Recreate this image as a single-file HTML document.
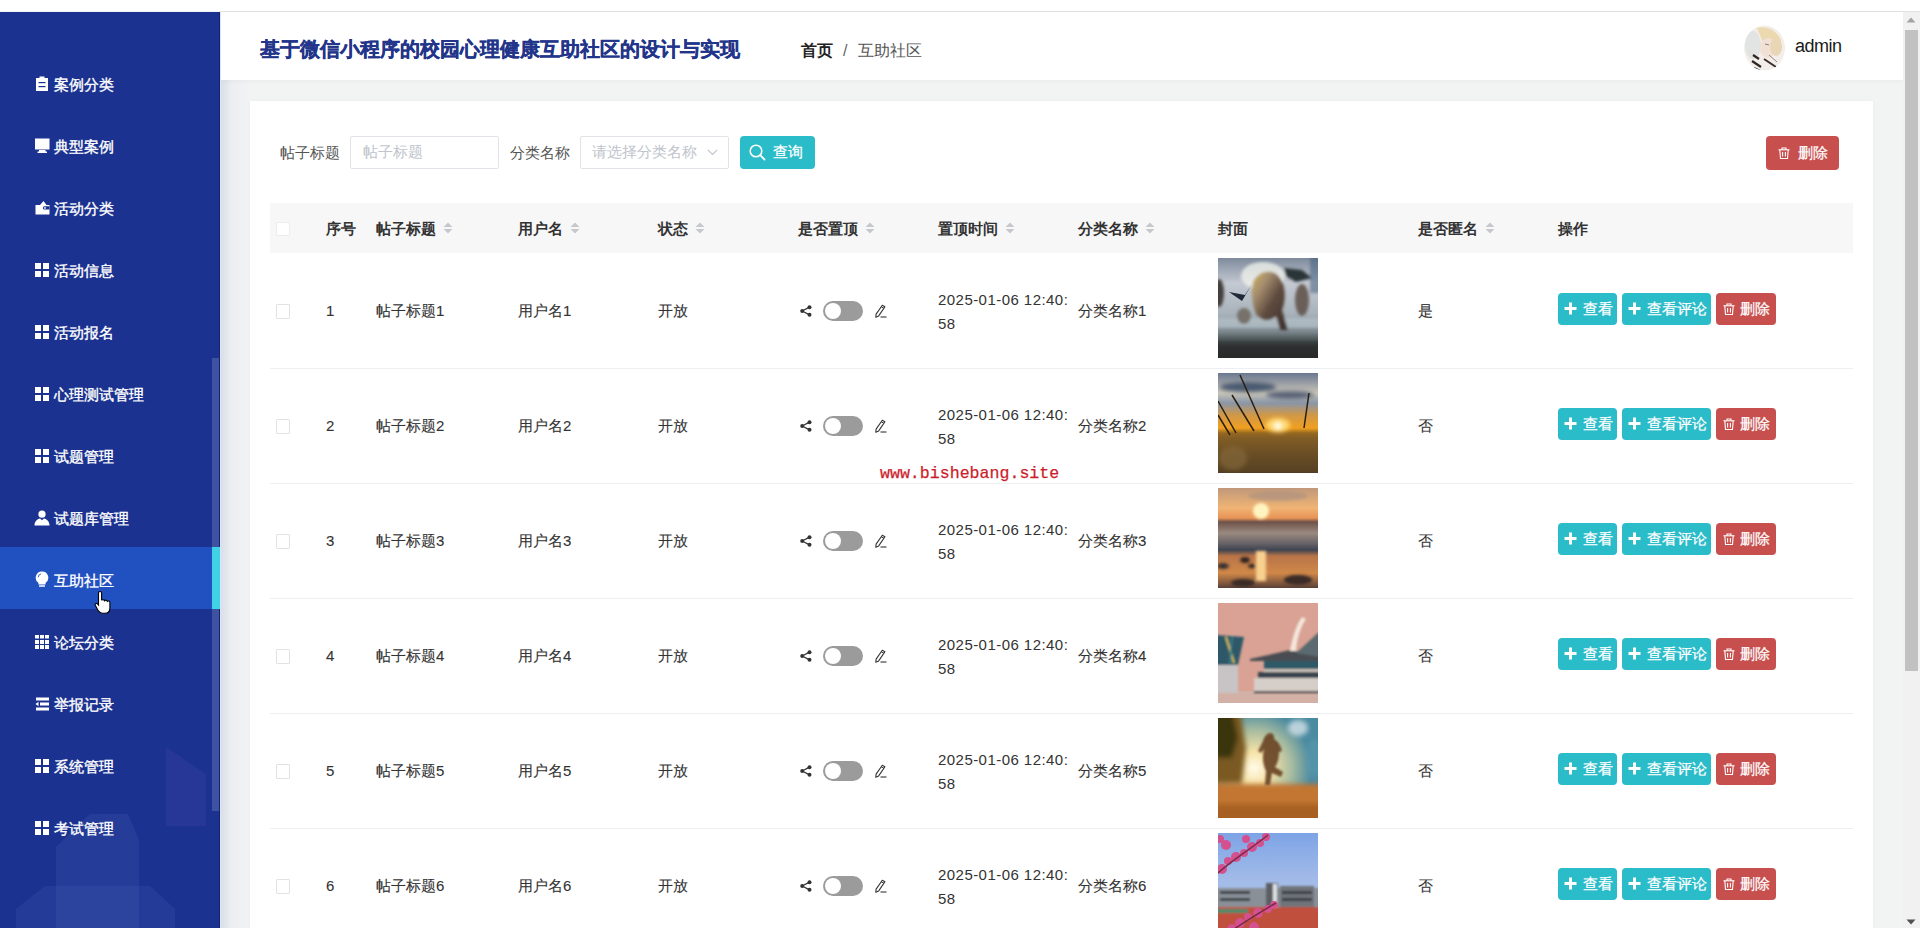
<!DOCTYPE html>
<html><head><meta charset="utf-8">
<style>
*{box-sizing:border-box;margin:0;padding:0}
html,body{width:1920px;height:928px;overflow:hidden;background:#f2f3f3;font-family:"Liberation Sans",sans-serif;color:#333}
.abs{position:absolute}
.mt{color:#fff;font-size:15px;line-height:22px;white-space:nowrap;-webkit-text-stroke:0.35px #fff}
.th{font-size:15px;font-weight:bold;color:#333;line-height:22px;white-space:nowrap}
.td{font-size:15px;color:#333;line-height:22px;white-space:nowrap;-webkit-text-stroke:0.1px #333}
.dt{line-height:24px;letter-spacing:0.45px;-webkit-text-stroke:0}
.cb{width:14px;height:14px;border:1px solid #ebedf0;border-radius:2px;background:#fff}
.cb2{width:14px;height:15px;border:1px solid #e2e2e2;border-radius:1px;background:#fff}
.sw{width:40px;height:20px;border-radius:10px;background:#9b9b9b}
.sw .knob{position:absolute;left:2px;top:2px;width:16px;height:16px;border-radius:50%;background:#fff}
.btn{height:32px;border-radius:4px;color:#fff;font-size:15px}
.teal{background:#2bbcc9}
.red{background:#c7504f}
.btn .pi{position:absolute;left:6px;top:9px;line-height:0}
.btn .ti{position:absolute;left:7px;top:10px;line-height:0}
.btn .bt{position:absolute;top:5px;line-height:22px;white-space:nowrap;-webkit-text-stroke:0.25px #fff}
</style></head><body>
<div class="abs" style="left:0;top:0;width:1920px;height:11px;background:#fff"></div>
<div class="abs" style="left:220px;top:11px;width:1700px;height:1px;background:#e1e2e5"></div>
<div class="abs" id="side" style="left:0;top:12px;width:220px;height:916px;background:#1b3290;overflow:hidden">
<svg class="abs" style="left:0;top:700px" width="220" height="216" viewBox="0 700 220 216"><path d="M56 835L90 802L128 802L139 828L139 928L56 928z" fill="rgba(110,130,210,0.13)"/><path d="M16 897L45 874L150 874L175 897L175 928L16 928z" fill="rgba(110,130,210,0.12)"/><path d="M166 735L206 762L206 814L166 814z" fill="rgba(120,90,200,0.13)"/></svg>
<div class="abs" style="left:212px;top:346px;width:7px;height:453px;background:#3d52a0"></div>
<div class="abs" style="left:219px;top:0;width:1px;height:916px;background:#1a2466"></div>
<div class="abs" style="left:35px;top:64px;line-height:0"><svg width="14" height="15" viewBox="0 0 14 15"><path d="M1 2h3.5v-1.5h5v1.5h3.5v13h-12z" fill="#fff"/><rect x="3.5" y="6" width="7" height="1.2" fill="#1b3290"/><rect x="3.5" y="10" width="7" height="1.2" fill="#1b3290"/></svg></div>
<div class="abs mt" style="left:54px;top:62px">案例分类</div>
<div class="abs" style="left:35px;top:126px;line-height:0"><svg width="15" height="15" viewBox="0 0 15 15"><rect x="0" y="0.5" width="14.5" height="11" fill="#fff"/><rect x="4" y="12" width="6.5" height="2" fill="#fff"/><rect x="2.5" y="13.5" width="9.5" height="1.5" fill="#fff"/></svg></div>
<div class="abs mt" style="left:54px;top:124px">典型案例</div>
<div class="abs" style="left:35px;top:188px;line-height:0"><svg width="15" height="15" viewBox="0 0 15 15"><path d="M0.5 5h14v9.5h-14z" fill="#fff"/><path d="M5 5l3.5-4 3 4z" fill="#fff"/><path d="M14.5 9.5h-5a1.6 1.6 0 0 1 0-3.2h5z" fill="#1b3290"/><circle cx="10" cy="7.9" r="0.9" fill="#fff"/></svg></div>
<div class="abs mt" style="left:54px;top:186px">活动分类</div>
<div class="abs" style="left:35px;top:251px;line-height:0"><svg width="14" height="14" viewBox="0 0 14 14"><rect x="0" y="0" width="6" height="6" fill="#fff"/><rect x="8" y="0" width="6" height="6" fill="#fff"/><rect x="0" y="8" width="6" height="6" fill="#fff"/><rect x="8" y="8" width="6" height="6" fill="#fff"/></svg></div>
<div class="abs mt" style="left:54px;top:248px">活动信息</div>
<div class="abs" style="left:35px;top:313px;line-height:0"><svg width="14" height="14" viewBox="0 0 14 14"><rect x="0" y="0" width="6" height="6" fill="#fff"/><rect x="8" y="0" width="6" height="6" fill="#fff"/><rect x="0" y="8" width="6" height="6" fill="#fff"/><rect x="8" y="8" width="6" height="6" fill="#fff"/></svg></div>
<div class="abs mt" style="left:54px;top:310px">活动报名</div>
<div class="abs" style="left:35px;top:375px;line-height:0"><svg width="14" height="14" viewBox="0 0 14 14"><rect x="0" y="0" width="6" height="6" fill="#fff"/><rect x="8" y="0" width="6" height="6" fill="#fff"/><rect x="0" y="8" width="6" height="6" fill="#fff"/><rect x="8" y="8" width="6" height="6" fill="#fff"/></svg></div>
<div class="abs mt" style="left:54px;top:372px">心理测试管理</div>
<div class="abs" style="left:35px;top:437px;line-height:0"><svg width="14" height="14" viewBox="0 0 14 14"><rect x="0" y="0" width="6" height="6" fill="#fff"/><rect x="8" y="0" width="6" height="6" fill="#fff"/><rect x="0" y="8" width="6" height="6" fill="#fff"/><rect x="8" y="8" width="6" height="6" fill="#fff"/></svg></div>
<div class="abs mt" style="left:54px;top:434px">试题管理</div>
<div class="abs" style="left:34px;top:498px;line-height:0"><svg width="16" height="16" viewBox="0 0 16 16"><circle cx="8" cy="4.2" r="3.6" fill="#fff"/><path d="M0.5 15.5c0-4 2.5-6.5 5.5-7l2 1.8 2-1.8c3 .5 5.5 3 5.5 7z" fill="#fff"/></svg></div>
<div class="abs mt" style="left:54px;top:496px">试题库管理</div>
<div class="abs" style="left:0;top:535px;width:220px;height:62px;background:#2150c0"></div>
<div class="abs" style="left:212px;top:535px;width:8px;height:62px;background:#3fd2e4"></div>
<div class="abs" style="left:35px;top:559px;line-height:0"><svg width="14" height="17" viewBox="0 0 14 17"><path d="M7 0.5a6.2 6.2 0 0 1 3.6 11.3v1.7h-7.2v-1.7A6.2 6.2 0 0 1 7 0.5z" fill="#fff"/><rect x="4" y="14.2" width="6" height="1.6" rx="0.6" fill="#fff"/><path d="M3.2 6.2a3.8 3.8 0 0 1 3-3.4" stroke="#2a55c4" stroke-width="0.9" fill="none"/></svg></div>
<div class="abs mt" style="left:54px;top:558px">互助社区</div>
<div class="abs" style="left:35px;top:623px;line-height:0"><svg width="14" height="14" viewBox="0 0 14 14"><g fill="#fff"><rect x="0" y="0" width="4" height="3.5"/><rect x="5" y="0" width="4" height="3.5"/><rect x="10" y="0" width="4" height="3.5"/><rect x="0" y="5" width="4" height="4"/><rect x="5" y="5" width="4" height="4"/><rect x="10" y="5" width="4" height="4"/><rect x="0" y="10" width="4" height="4"/><rect x="5" y="10" width="4" height="4"/><rect x="10" y="10" width="4" height="4"/></g></svg></div>
<div class="abs mt" style="left:54px;top:620px">论坛分类</div>
<div class="abs" style="left:35px;top:685px;line-height:0"><svg width="14" height="14" viewBox="0 0 14 14"><g fill="#fff"><rect x="1" y="0.5" width="13" height="3"/><rect x="5" y="5.5" width="9" height="3"/><path d="M0.5 7l3-2.2v4.4z"/><rect x="1" y="10.5" width="13" height="3"/></g></svg></div>
<div class="abs mt" style="left:54px;top:682px">举报记录</div>
<div class="abs" style="left:35px;top:747px;line-height:0"><svg width="14" height="14" viewBox="0 0 14 14"><rect x="0" y="0" width="6" height="6" fill="#fff"/><rect x="8" y="0" width="6" height="6" fill="#fff"/><rect x="0" y="8" width="6" height="6" fill="#fff"/><rect x="8" y="8" width="6" height="6" fill="#fff"/></svg></div>
<div class="abs mt" style="left:54px;top:744px">系统管理</div>
<div class="abs" style="left:35px;top:809px;line-height:0"><svg width="14" height="14" viewBox="0 0 14 14"><rect x="0" y="0" width="6" height="6" fill="#fff"/><rect x="8" y="0" width="6" height="6" fill="#fff"/><rect x="0" y="8" width="6" height="6" fill="#fff"/><rect x="8" y="8" width="6" height="6" fill="#fff"/></svg></div>
<div class="abs mt" style="left:54px;top:806px">考试管理</div>
<svg class="abs" style="left:94px;top:578px" width="20" height="24" viewBox="0 0 20 24"><path d="M6 1.5c1 0 1.6.7 1.6 1.6v7.2c.3-.6 2.6-.9 2.9.4.5-.8 2.5-.8 2.8.6.6-.6 2.5-.4 2.6 1.2v5.5c0 3-1.8 5.3-5 5.3h-2.5c-2 0-3-1-4.2-2.6L1.3 15.2c-.7-1 .7-2.5 2-1.5l1.2 1.3V3.1c0-.9.6-1.6 1.5-1.6z" fill="#fff" stroke="#000" stroke-width="1.1"/></svg>
</div>
<div class="abs" style="left:220px;top:12px;width:1px;height:916px;background:#dbe3ff"></div>
<div class="abs" style="left:221px;top:80px;width:29px;height:848px;background:linear-gradient(90deg,#d9dee8,#eceef1 35%,#f2f3f3)"></div>
<div class="abs" style="left:221px;top:12px;width:1682px;height:68px;background:#fff;box-shadow:0 2px 5px rgba(0,0,0,0.03)"></div>
<div class="abs" style="left:260px;top:35px;font-size:20px;font-weight:bold;color:#22358a;line-height:28px;white-space:nowrap;-webkit-text-stroke:0.3px #22358a">基于微信小程序的校园心理健康互助社区的设计与实现</div>
<div class="abs" style="left:801px;top:40px;font-size:16px;font-weight:bold;color:#222;line-height:22px">首页</div>
<div class="abs" style="left:843px;top:40px;font-size:16px;color:#666;line-height:22px">/</div>
<div class="abs" style="left:858px;top:40px;font-size:16px;color:#555;line-height:22px">互助社区</div>
<svg class="abs" style="left:1743px;top:25px" width="44" height="46" viewBox="0 0 44 46"><defs><filter id="ba"><feGaussianBlur stdDeviation="0.7"/></filter><clipPath id="ca"><ellipse cx="21.5" cy="23" rx="20.5" ry="22.5"/></clipPath></defs><g clip-path="url(#ca)" filter="url(#ba)"><rect width="44" height="46" fill="#f3eee9"/><ellipse cx="10" cy="20" rx="8" ry="14" fill="#e2e4e4"/><path d="M14 3c10-3 20 3 24 12l0 12-14 0z" fill="#ecd9b0"/><ellipse cx="25" cy="23" rx="8" ry="10" fill="#f2e0d4"/><ellipse cx="33" cy="22" rx="6" ry="9" fill="#e9d6b4"/><path d="M22 19l4 1" stroke="#8a8080" stroke-width="1.2"/><g stroke="#2e2622" stroke-width="2.2"><path d="M10 30l6 4"/><path d="M9 36l9 6"/><path d="M11 43l6 3"/></g><path d="M21 34l12 8" stroke="#3a2e2a" stroke-width="2"/><path d="M26 30l8 7" stroke="#8a7a70" stroke-width="0.9"/></g></svg>
<div class="abs" style="left:1795px;top:35px;font-size:18px;letter-spacing:-0.5px;color:#1a1a1a;line-height:22px">admin</div>
<div class="abs" style="left:250px;top:101px;width:1623px;height:840px;background:#fff;box-shadow:0 0 5px rgba(0,0,0,0.035)"></div>
<div class="abs" style="left:280px;top:142px;font-size:15px;color:#555;line-height:22px">帖子标题</div>
<div class="abs" style="left:350px;top:136px;width:149px;height:33px;border:1px solid #e1e3e8;border-radius:2px;background:#fff"></div>
<div class="abs" style="left:363px;top:141px;font-size:15px;color:#c0c4cc;line-height:22px">帖子标题</div>
<div class="abs" style="left:510px;top:142px;font-size:15px;color:#555;line-height:22px">分类名称</div>
<div class="abs" style="left:580px;top:136px;width:149px;height:33px;border:1px solid #e1e3e8;border-radius:2px;background:#fff"></div>
<div class="abs" style="left:592px;top:141px;font-size:15px;color:#c0c4cc;line-height:22px">请选择分类名称</div>
<div class="abs" style="left:707px;top:149px;line-height:0"><svg width="11" height="7" viewBox="0 0 11 7"><path d="M0.8 0.8l4.7 4.7 4.7-4.7" fill="none" stroke="#c0c4cc" stroke-width="1.1"/></svg></div>
<div class="abs btn teal" style="left:740px;top:136px;width:75px;height:33px"><span class="abs" style="left:9px;top:8px;line-height:0"><svg width="17" height="17" viewBox="0 0 17 17"><circle cx="7" cy="7" r="5.8" fill="none" stroke="#fff" stroke-width="1.6"/><path d="M11.2 11.2l4.3 4.3" stroke="#fff" stroke-width="1.8" stroke-linecap="round"/></svg></span><span class="bt" style="left:33px">查询</span></div>
<div class="abs btn red" style="left:1766px;top:136px;width:73px;height:34px"><span class="abs" style="left:12px;top:11px;line-height:0"><svg width="12" height="12" viewBox="0 0 12 12"><g fill="none" stroke="#fff" stroke-width="1.1"><path d="M0.5 2.8h11"/><path d="M4 2.8v-1.8h4v1.8"/><path d="M1.8 2.8l.7 8.7h7l.7-8.7"/><path d="M4.6 5v4.5M7.4 5v4.5"/></g></svg></span><span class="bt" style="left:32px;top:6px">删除</span></div>
<div class="abs" style="left:270px;top:203px;width:1583px;height:50px;background:#f7f7f8"></div>
<div class="abs cb" style="left:276px;top:222px"></div>
<div class="abs th" style="left:326px;top:218px">序号</div>
<div class="abs th" style="left:376px;top:218px">帖子标题</div>
<div class="abs" style="left:443px;top:222px;line-height:0"><svg width="10" height="12" viewBox="0 0 10 12"><path d="M5 0.5L9.5 5H0.5z" fill="#c6c8cc"/><path d="M5 11.5L9.5 7H0.5z" fill="#c6c8cc"/></svg></div>
<div class="abs th" style="left:518px;top:218px">用户名</div>
<div class="abs" style="left:570px;top:222px;line-height:0"><svg width="10" height="12" viewBox="0 0 10 12"><path d="M5 0.5L9.5 5H0.5z" fill="#c6c8cc"/><path d="M5 11.5L9.5 7H0.5z" fill="#c6c8cc"/></svg></div>
<div class="abs th" style="left:658px;top:218px">状态</div>
<div class="abs" style="left:695px;top:222px;line-height:0"><svg width="10" height="12" viewBox="0 0 10 12"><path d="M5 0.5L9.5 5H0.5z" fill="#c6c8cc"/><path d="M5 11.5L9.5 7H0.5z" fill="#c6c8cc"/></svg></div>
<div class="abs th" style="left:798px;top:218px">是否置顶</div>
<div class="abs" style="left:865px;top:222px;line-height:0"><svg width="10" height="12" viewBox="0 0 10 12"><path d="M5 0.5L9.5 5H0.5z" fill="#c6c8cc"/><path d="M5 11.5L9.5 7H0.5z" fill="#c6c8cc"/></svg></div>
<div class="abs th" style="left:938px;top:218px">置顶时间</div>
<div class="abs" style="left:1005px;top:222px;line-height:0"><svg width="10" height="12" viewBox="0 0 10 12"><path d="M5 0.5L9.5 5H0.5z" fill="#c6c8cc"/><path d="M5 11.5L9.5 7H0.5z" fill="#c6c8cc"/></svg></div>
<div class="abs th" style="left:1078px;top:218px">分类名称</div>
<div class="abs" style="left:1145px;top:222px;line-height:0"><svg width="10" height="12" viewBox="0 0 10 12"><path d="M5 0.5L9.5 5H0.5z" fill="#c6c8cc"/><path d="M5 11.5L9.5 7H0.5z" fill="#c6c8cc"/></svg></div>
<div class="abs th" style="left:1218px;top:218px">封面</div>
<div class="abs th" style="left:1418px;top:218px">是否匿名</div>
<div class="abs" style="left:1485px;top:222px;line-height:0"><svg width="10" height="12" viewBox="0 0 10 12"><path d="M5 0.5L9.5 5H0.5z" fill="#c6c8cc"/><path d="M5 11.5L9.5 7H0.5z" fill="#c6c8cc"/></svg></div>
<div class="abs th" style="left:1558px;top:218px">操作</div>
<div class="abs cb2" style="left:276px;top:304px"></div>
<div class="abs td" style="left:326px;top:300px">1</div>
<div class="abs td" style="left:376px;top:300px">帖子标题1</div>
<div class="abs td" style="left:518px;top:300px">用户名1</div>
<div class="abs td" style="left:658px;top:300px">开放</div>
<div class="abs" style="left:800px;top:305px;line-height:0"><svg width="12" height="12" viewBox="0 0 12 12"><g fill="#333"><circle cx="2.2" cy="6" r="2"/><circle cx="9.5" cy="2.2" r="2"/><circle cx="9.5" cy="9.8" r="2"/></g><path d="M2.2 6L9.5 2.2M2.2 6L9.5 9.8" stroke="#333" stroke-width="1.3"/></svg></div>
<div class="abs sw" style="left:823px;top:301px"><div class="knob"></div></div>
<div class="abs" style="left:874px;top:304px;line-height:0"><svg width="13" height="14" viewBox="0 0 13 14"><path d="M8.3 1.2l2.6 1.5-6.2 9.2-2.9 1.3.3-3.1z" fill="none" stroke="#333" stroke-width="1.1" stroke-linejoin="round"/><path d="M7.3 2.8l2.6 1.5" stroke="#333" stroke-width="1"/><path d="M6.5 13h6" stroke="#333" stroke-width="1.1"/></svg></div>
<div class="abs td dt" style="left:938px;top:288px">2025-01-06 12:40:<br>58</div>
<div class="abs td" style="left:1078px;top:300px">分类名称1</div>
<div class="abs" style="left:1218px;top:258px;width:100px;height:100px;overflow:hidden;line-height:0"><svg width="100" height="100" viewBox="0 0 100 100"><defs><filter id="b1" x="-30%" y="-30%" width="160%" height="160%"><feGaussianBlur stdDeviation="1.6"/></filter><linearGradient id="g1" x1="0" y1="0" x2="0" y2="1"><stop offset="0" stop-color="#7e8a9c"/><stop offset="0.25" stop-color="#c4c9d2"/><stop offset="0.55" stop-color="#a9b3bb"/><stop offset="0.74" stop-color="#7a868c"/><stop offset="0.84" stop-color="#3c4444"/><stop offset="1" stop-color="#2a2e2e"/></linearGradient><linearGradient id="r1" x1="0" y1="0" x2="1" y2="1"><stop offset="0" stop-color="#d0b450"/><stop offset="0.25" stop-color="#a89070"/><stop offset="0.55" stop-color="#5e4a3e"/><stop offset="1" stop-color="#3a2e28"/></linearGradient></defs>
 <rect width="100" height="100" fill="url(#g1)"/>
 <g filter="url(#b1)"><ellipse cx="45" cy="18" rx="22" ry="14" fill="#eef0ea" opacity="0.8"/><rect x="-10" y="60" width="120" height="10" fill="#b8c4cc" opacity="0.7"/>
 <path d="M36 22c6-10 20-12 26-2 6 8 6 22 2 32l6 20-8 0-4-14c-6 6-14 6-20-2-4-10-6-24-2-34z" fill="url(#r1)"/>
 <ellipse cx="84" cy="42" rx="7" ry="16" fill="#6b5e58"/><ellipse cx="26" cy="58" rx="7" ry="8" fill="#77716a"/>
 <path d="M66 10l18 2 10 8-16 4-10-6z" fill="#2a3438"/><rect x="92" y="-5" width="15" height="40" fill="#3e5a78" opacity="0.5"/>
 <ellipse cx="1" cy="35" rx="5" ry="14" fill="#44403c"/><rect x="-10" y="86" width="120" height="30" fill="#262a2a" opacity="0.6"/></g>
 <path d="M11 34l13 9 10-17-7 11z" fill="#1e2a38"/></svg></div>
<div class="abs td" style="left:1418px;top:300px">是</div>
<div class="abs btn teal" style="left:1558px;top:293px;width:59px"><span class="pi"><svg width="13" height="13" viewBox="0 0 13 13"><path d="M6.5 0.5v12M0.5 6.5h12" stroke="#fff" stroke-width="3"/></svg></span><span class="bt" style="left:25px">查看</span></div>
<div class="abs btn teal" style="left:1622px;top:293px;width:89px"><span class="pi"><svg width="13" height="13" viewBox="0 0 13 13"><path d="M6.5 0.5v12M0.5 6.5h12" stroke="#fff" stroke-width="3"/></svg></span><span class="bt" style="left:25px">查看评论</span></div>
<div class="abs btn red" style="left:1716px;top:293px;width:60px"><span class="ti"><svg width="12" height="12" viewBox="0 0 12 12"><g fill="none" stroke="#fff" stroke-width="1.1"><path d="M0.5 2.8h11"/><path d="M4 2.8v-1.8h4v1.8"/><path d="M1.8 2.8l.7 8.7h7l.7-8.7"/><path d="M4.6 5v4.5M7.4 5v4.5"/></g></svg></span><span class="bt" style="left:24px">删除</span></div>
<div class="abs" style="left:270px;top:368px;width:1583px;height:1px;background:#eeeff0"></div>
<div class="abs cb2" style="left:276px;top:419px"></div>
<div class="abs td" style="left:326px;top:415px">2</div>
<div class="abs td" style="left:376px;top:415px">帖子标题2</div>
<div class="abs td" style="left:518px;top:415px">用户名2</div>
<div class="abs td" style="left:658px;top:415px">开放</div>
<div class="abs" style="left:800px;top:420px;line-height:0"><svg width="12" height="12" viewBox="0 0 12 12"><g fill="#333"><circle cx="2.2" cy="6" r="2"/><circle cx="9.5" cy="2.2" r="2"/><circle cx="9.5" cy="9.8" r="2"/></g><path d="M2.2 6L9.5 2.2M2.2 6L9.5 9.8" stroke="#333" stroke-width="1.3"/></svg></div>
<div class="abs sw" style="left:823px;top:416px"><div class="knob"></div></div>
<div class="abs" style="left:874px;top:419px;line-height:0"><svg width="13" height="14" viewBox="0 0 13 14"><path d="M8.3 1.2l2.6 1.5-6.2 9.2-2.9 1.3.3-3.1z" fill="none" stroke="#333" stroke-width="1.1" stroke-linejoin="round"/><path d="M7.3 2.8l2.6 1.5" stroke="#333" stroke-width="1"/><path d="M6.5 13h6" stroke="#333" stroke-width="1.1"/></svg></div>
<div class="abs td dt" style="left:938px;top:403px">2025-01-06 12:40:<br>58</div>
<div class="abs td" style="left:1078px;top:415px">分类名称2</div>
<div class="abs" style="left:1218px;top:373px;width:100px;height:100px;overflow:hidden;line-height:0"><svg width="100" height="100" viewBox="0 0 100 100"><defs><filter id="b2" x="-30%" y="-30%" width="160%" height="160%"><feGaussianBlur stdDeviation="2"/></filter><linearGradient id="s2" x1="0" y1="0" x2="0" y2="1"><stop offset="0" stop-color="#6a7890"/><stop offset="0.2" stop-color="#c8c4b8"/><stop offset="0.3" stop-color="#8a96a8"/><stop offset="0.42" stop-color="#d09848"/><stop offset="0.55" stop-color="#f0a020"/><stop offset="0.6" stop-color="#9a6a20"/><stop offset="0.8" stop-color="#5a4420"/><stop offset="1" stop-color="#30281a"/></linearGradient></defs>
 <rect width="100" height="100" fill="url(#s2)"/>
 <g filter="url(#b2)"><ellipse cx="30" cy="14" rx="28" ry="5" fill="#4a5a70"/><ellipse cx="72" cy="22" rx="24" ry="4" fill="#5a6478"/><ellipse cx="60" cy="52" rx="12" ry="7" fill="#ffd870"/><circle cx="60" cy="53" r="4" fill="#fffbe0"/><rect x="-10" y="62" width="120" height="40" fill="#7a5a28" opacity="0.5"/><ellipse cx="15" cy="85" rx="14" ry="12" fill="#8a6a40" opacity="0.6"/></g>
 <g stroke="#2a1e10" stroke-width="1.5" fill="none"><path d="M22 2L46 56"/><path d="M14 22L36 58"/><path d="M0 28L18 60"/><path d="M0 42L12 62"/><path d="M91 20L86 55"/></g></svg></div>
<div class="abs td" style="left:1418px;top:415px">否</div>
<div class="abs btn teal" style="left:1558px;top:408px;width:59px"><span class="pi"><svg width="13" height="13" viewBox="0 0 13 13"><path d="M6.5 0.5v12M0.5 6.5h12" stroke="#fff" stroke-width="3"/></svg></span><span class="bt" style="left:25px">查看</span></div>
<div class="abs btn teal" style="left:1622px;top:408px;width:89px"><span class="pi"><svg width="13" height="13" viewBox="0 0 13 13"><path d="M6.5 0.5v12M0.5 6.5h12" stroke="#fff" stroke-width="3"/></svg></span><span class="bt" style="left:25px">查看评论</span></div>
<div class="abs btn red" style="left:1716px;top:408px;width:60px"><span class="ti"><svg width="12" height="12" viewBox="0 0 12 12"><g fill="none" stroke="#fff" stroke-width="1.1"><path d="M0.5 2.8h11"/><path d="M4 2.8v-1.8h4v1.8"/><path d="M1.8 2.8l.7 8.7h7l.7-8.7"/><path d="M4.6 5v4.5M7.4 5v4.5"/></g></svg></span><span class="bt" style="left:24px">删除</span></div>
<div class="abs" style="left:270px;top:483px;width:1583px;height:1px;background:#eeeff0"></div>
<div class="abs cb2" style="left:276px;top:534px"></div>
<div class="abs td" style="left:326px;top:530px">3</div>
<div class="abs td" style="left:376px;top:530px">帖子标题3</div>
<div class="abs td" style="left:518px;top:530px">用户名3</div>
<div class="abs td" style="left:658px;top:530px">开放</div>
<div class="abs" style="left:800px;top:535px;line-height:0"><svg width="12" height="12" viewBox="0 0 12 12"><g fill="#333"><circle cx="2.2" cy="6" r="2"/><circle cx="9.5" cy="2.2" r="2"/><circle cx="9.5" cy="9.8" r="2"/></g><path d="M2.2 6L9.5 2.2M2.2 6L9.5 9.8" stroke="#333" stroke-width="1.3"/></svg></div>
<div class="abs sw" style="left:823px;top:531px"><div class="knob"></div></div>
<div class="abs" style="left:874px;top:534px;line-height:0"><svg width="13" height="14" viewBox="0 0 13 14"><path d="M8.3 1.2l2.6 1.5-6.2 9.2-2.9 1.3.3-3.1z" fill="none" stroke="#333" stroke-width="1.1" stroke-linejoin="round"/><path d="M7.3 2.8l2.6 1.5" stroke="#333" stroke-width="1"/><path d="M6.5 13h6" stroke="#333" stroke-width="1.1"/></svg></div>
<div class="abs td dt" style="left:938px;top:518px">2025-01-06 12:40:<br>58</div>
<div class="abs td" style="left:1078px;top:530px">分类名称3</div>
<div class="abs" style="left:1218px;top:488px;width:100px;height:100px;overflow:hidden;line-height:0"><svg width="100" height="100" viewBox="0 0 100 100"><defs><filter id="b3" x="-30%" y="-30%" width="160%" height="160%"><feGaussianBlur stdDeviation="1.8"/></filter><linearGradient id="s3" x1="0" y1="0" x2="0" y2="1"><stop offset="0" stop-color="#c0987a"/><stop offset="0.2" stop-color="#f0b474"/><stop offset="0.3" stop-color="#e89456"/><stop offset="0.34" stop-color="#6e5248"/><stop offset="0.45" stop-color="#9a8a80"/><stop offset="0.55" stop-color="#6a6468"/><stop offset="0.62" stop-color="#3e4450"/><stop offset="0.68" stop-color="#b87448"/><stop offset="0.85" stop-color="#d08848"/><stop offset="1" stop-color="#5a4038"/></linearGradient></defs>
 <rect width="100" height="100" fill="url(#s3)"/>
 <g filter="url(#b3)"><circle cx="43" cy="23" r="8" fill="#fff4c0"/><ellipse cx="60" cy="8" rx="30" ry="5" fill="#a89080" opacity="0.6"/><rect x="38" y="63" width="10" height="30" fill="#f8d090"/><ellipse cx="27" cy="72" rx="5" ry="3" fill="#2a2020"/><ellipse cx="34" cy="78" rx="4" ry="2" fill="#2a2020"/><ellipse cx="80" cy="92" rx="14" ry="5" fill="#3a2a28"/><ellipse cx="25" cy="95" rx="12" ry="4" fill="#3a2a28"/><ellipse cx="5" cy="78" rx="6" ry="3" fill="#3a3030"/></g></svg></div>
<div class="abs td" style="left:1418px;top:530px">否</div>
<div class="abs btn teal" style="left:1558px;top:523px;width:59px"><span class="pi"><svg width="13" height="13" viewBox="0 0 13 13"><path d="M6.5 0.5v12M0.5 6.5h12" stroke="#fff" stroke-width="3"/></svg></span><span class="bt" style="left:25px">查看</span></div>
<div class="abs btn teal" style="left:1622px;top:523px;width:89px"><span class="pi"><svg width="13" height="13" viewBox="0 0 13 13"><path d="M6.5 0.5v12M0.5 6.5h12" stroke="#fff" stroke-width="3"/></svg></span><span class="bt" style="left:25px">查看评论</span></div>
<div class="abs btn red" style="left:1716px;top:523px;width:60px"><span class="ti"><svg width="12" height="12" viewBox="0 0 12 12"><g fill="none" stroke="#fff" stroke-width="1.1"><path d="M0.5 2.8h11"/><path d="M4 2.8v-1.8h4v1.8"/><path d="M1.8 2.8l.7 8.7h7l.7-8.7"/><path d="M4.6 5v4.5M7.4 5v4.5"/></g></svg></span><span class="bt" style="left:24px">删除</span></div>
<div class="abs" style="left:270px;top:598px;width:1583px;height:1px;background:#eeeff0"></div>
<div class="abs cb2" style="left:276px;top:649px"></div>
<div class="abs td" style="left:326px;top:645px">4</div>
<div class="abs td" style="left:376px;top:645px">帖子标题4</div>
<div class="abs td" style="left:518px;top:645px">用户名4</div>
<div class="abs td" style="left:658px;top:645px">开放</div>
<div class="abs" style="left:800px;top:650px;line-height:0"><svg width="12" height="12" viewBox="0 0 12 12"><g fill="#333"><circle cx="2.2" cy="6" r="2"/><circle cx="9.5" cy="2.2" r="2"/><circle cx="9.5" cy="9.8" r="2"/></g><path d="M2.2 6L9.5 2.2M2.2 6L9.5 9.8" stroke="#333" stroke-width="1.3"/></svg></div>
<div class="abs sw" style="left:823px;top:646px"><div class="knob"></div></div>
<div class="abs" style="left:874px;top:649px;line-height:0"><svg width="13" height="14" viewBox="0 0 13 14"><path d="M8.3 1.2l2.6 1.5-6.2 9.2-2.9 1.3.3-3.1z" fill="none" stroke="#333" stroke-width="1.1" stroke-linejoin="round"/><path d="M7.3 2.8l2.6 1.5" stroke="#333" stroke-width="1"/><path d="M6.5 13h6" stroke="#333" stroke-width="1.1"/></svg></div>
<div class="abs td dt" style="left:938px;top:633px">2025-01-06 12:40:<br>58</div>
<div class="abs td" style="left:1078px;top:645px">分类名称4</div>
<div class="abs" style="left:1218px;top:603px;width:100px;height:100px;overflow:hidden;line-height:0"><svg width="100" height="100" viewBox="0 0 100 100"><defs><filter id="b4" x="-30%" y="-30%" width="160%" height="160%"><feGaussianBlur stdDeviation="1"/></filter></defs>
 <rect width="100" height="100" fill="#d9a294"/><rect y="88" width="100" height="12" fill="#d2b0a6"/>
 <g filter="url(#b4)"><rect x="-2" y="60" width="22" height="30" fill="#c8c4c6"/><path d="M-2 32l28 2-6 28h-22z" fill="#2e5868"/><path d="M8 34l8 26" stroke="#d8c050" stroke-width="2"/><path d="M14 33l-2 28" stroke="#3a7a8a" stroke-width="2"/>
 <path d="M32 56l40-9 30 6v5h-70z" fill="#4a4e52"/><rect x="46" y="58" width="56" height="8" fill="#2e5a68"/><rect x="46" y="66" width="56" height="3" fill="#c8c0b8"/><rect x="40" y="69" width="62" height="6" fill="#3a4450"/><rect x="36" y="75" width="66" height="14" fill="#d6cec8"/><rect x="36" y="88" width="66" height="2" fill="#3a3a40"/>
 <path d="M72 48c2-12 6-26 12-34l4 2c-6 9-9 20-10 32z" fill="#f4e6dc"/><path d="M78 50l24-22v26z" fill="#5a6a70"/></g></svg></div>
<div class="abs td" style="left:1418px;top:645px">否</div>
<div class="abs btn teal" style="left:1558px;top:638px;width:59px"><span class="pi"><svg width="13" height="13" viewBox="0 0 13 13"><path d="M6.5 0.5v12M0.5 6.5h12" stroke="#fff" stroke-width="3"/></svg></span><span class="bt" style="left:25px">查看</span></div>
<div class="abs btn teal" style="left:1622px;top:638px;width:89px"><span class="pi"><svg width="13" height="13" viewBox="0 0 13 13"><path d="M6.5 0.5v12M0.5 6.5h12" stroke="#fff" stroke-width="3"/></svg></span><span class="bt" style="left:25px">查看评论</span></div>
<div class="abs btn red" style="left:1716px;top:638px;width:60px"><span class="ti"><svg width="12" height="12" viewBox="0 0 12 12"><g fill="none" stroke="#fff" stroke-width="1.1"><path d="M0.5 2.8h11"/><path d="M4 2.8v-1.8h4v1.8"/><path d="M1.8 2.8l.7 8.7h7l.7-8.7"/><path d="M4.6 5v4.5M7.4 5v4.5"/></g></svg></span><span class="bt" style="left:24px">删除</span></div>
<div class="abs" style="left:270px;top:713px;width:1583px;height:1px;background:#eeeff0"></div>
<div class="abs cb2" style="left:276px;top:764px"></div>
<div class="abs td" style="left:326px;top:760px">5</div>
<div class="abs td" style="left:376px;top:760px">帖子标题5</div>
<div class="abs td" style="left:518px;top:760px">用户名5</div>
<div class="abs td" style="left:658px;top:760px">开放</div>
<div class="abs" style="left:800px;top:765px;line-height:0"><svg width="12" height="12" viewBox="0 0 12 12"><g fill="#333"><circle cx="2.2" cy="6" r="2"/><circle cx="9.5" cy="2.2" r="2"/><circle cx="9.5" cy="9.8" r="2"/></g><path d="M2.2 6L9.5 2.2M2.2 6L9.5 9.8" stroke="#333" stroke-width="1.3"/></svg></div>
<div class="abs sw" style="left:823px;top:761px"><div class="knob"></div></div>
<div class="abs" style="left:874px;top:764px;line-height:0"><svg width="13" height="14" viewBox="0 0 13 14"><path d="M8.3 1.2l2.6 1.5-6.2 9.2-2.9 1.3.3-3.1z" fill="none" stroke="#333" stroke-width="1.1" stroke-linejoin="round"/><path d="M7.3 2.8l2.6 1.5" stroke="#333" stroke-width="1"/><path d="M6.5 13h6" stroke="#333" stroke-width="1.1"/></svg></div>
<div class="abs td dt" style="left:938px;top:748px">2025-01-06 12:40:<br>58</div>
<div class="abs td" style="left:1078px;top:760px">分类名称5</div>
<div class="abs" style="left:1218px;top:718px;width:100px;height:100px;overflow:hidden;line-height:0"><svg width="100" height="100" viewBox="0 0 100 100"><defs><filter id="b5" x="-30%" y="-30%" width="160%" height="160%"><feGaussianBlur stdDeviation="2.5"/></filter><radialGradient id="g5" cx="36%" cy="50%" r="58%"><stop offset="0" stop-color="#fffbe8"/><stop offset="0.28" stop-color="#f6e2a8"/><stop offset="0.65" stop-color="#a8bca0"/><stop offset="1" stop-color="#4a8aa0"/></radialGradient></defs>
 <rect width="100" height="100" fill="url(#g5)"/>
 <g filter="url(#b5)"><path d="M-10 -10h32l6 40-4 35h-34z" fill="#7a5a24"/><path d="M-10 -10h24l6 30-6 20h-24z" fill="#3a3410"/><rect x="-10" y="66" width="120" height="44" fill="#c27630"/><rect x="-10" y="86" width="120" height="24" fill="#a86020"/><ellipse cx="80" cy="10" rx="10" ry="8" fill="#e8f0f4" opacity="0.7"/><ellipse cx="96" cy="40" rx="8" ry="20" fill="#5a9ab0" opacity="0.6"/></g>
 <path d="M52 15c3 0 5 3 4 6 4 2 7 7 8 12l-3 1c0 6-1 11-4 15l8 5-2 5-9-4-2 12-5 0 1-14c-3-6-4-14-2-22l-3 4-3-2 5-10c1-4 4-8 7-8z" fill="#6a4426" opacity="0.92" filter="url(#b4)"/></svg></div>
<div class="abs td" style="left:1418px;top:760px">否</div>
<div class="abs btn teal" style="left:1558px;top:753px;width:59px"><span class="pi"><svg width="13" height="13" viewBox="0 0 13 13"><path d="M6.5 0.5v12M0.5 6.5h12" stroke="#fff" stroke-width="3"/></svg></span><span class="bt" style="left:25px">查看</span></div>
<div class="abs btn teal" style="left:1622px;top:753px;width:89px"><span class="pi"><svg width="13" height="13" viewBox="0 0 13 13"><path d="M6.5 0.5v12M0.5 6.5h12" stroke="#fff" stroke-width="3"/></svg></span><span class="bt" style="left:25px">查看评论</span></div>
<div class="abs btn red" style="left:1716px;top:753px;width:60px"><span class="ti"><svg width="12" height="12" viewBox="0 0 12 12"><g fill="none" stroke="#fff" stroke-width="1.1"><path d="M0.5 2.8h11"/><path d="M4 2.8v-1.8h4v1.8"/><path d="M1.8 2.8l.7 8.7h7l.7-8.7"/><path d="M4.6 5v4.5M7.4 5v4.5"/></g></svg></span><span class="bt" style="left:24px">删除</span></div>
<div class="abs" style="left:270px;top:828px;width:1583px;height:1px;background:#eeeff0"></div>
<div class="abs cb2" style="left:276px;top:879px"></div>
<div class="abs td" style="left:326px;top:875px">6</div>
<div class="abs td" style="left:376px;top:875px">帖子标题6</div>
<div class="abs td" style="left:518px;top:875px">用户名6</div>
<div class="abs td" style="left:658px;top:875px">开放</div>
<div class="abs" style="left:800px;top:880px;line-height:0"><svg width="12" height="12" viewBox="0 0 12 12"><g fill="#333"><circle cx="2.2" cy="6" r="2"/><circle cx="9.5" cy="2.2" r="2"/><circle cx="9.5" cy="9.8" r="2"/></g><path d="M2.2 6L9.5 2.2M2.2 6L9.5 9.8" stroke="#333" stroke-width="1.3"/></svg></div>
<div class="abs sw" style="left:823px;top:876px"><div class="knob"></div></div>
<div class="abs" style="left:874px;top:879px;line-height:0"><svg width="13" height="14" viewBox="0 0 13 14"><path d="M8.3 1.2l2.6 1.5-6.2 9.2-2.9 1.3.3-3.1z" fill="none" stroke="#333" stroke-width="1.1" stroke-linejoin="round"/><path d="M7.3 2.8l2.6 1.5" stroke="#333" stroke-width="1"/><path d="M6.5 13h6" stroke="#333" stroke-width="1.1"/></svg></div>
<div class="abs td dt" style="left:938px;top:863px">2025-01-06 12:40:<br>58</div>
<div class="abs td" style="left:1078px;top:875px">分类名称6</div>
<div class="abs" style="left:1218px;top:833px;width:100px;height:95px;overflow:hidden;line-height:0"><svg width="100" height="100" viewBox="0 0 100 100"><defs><filter id="b6" x="-30%" y="-30%" width="160%" height="160%"><feGaussianBlur stdDeviation="1.1"/></filter><linearGradient id="s6" x1="0" y1="0" x2="0" y2="1"><stop offset="0" stop-color="#7ea4e6"/><stop offset="0.5" stop-color="#a4bce8"/></linearGradient></defs>
 <rect width="100" height="100" fill="url(#s6)"/>
 <g filter="url(#b6)"><rect x="-10" y="55" width="120" height="20" fill="#8a9098"/><rect x="48" y="50" width="12" height="26" fill="#5a5e64"/><rect x="55" y="51" width="4" height="26" fill="#e0e0e4"/><rect x="62" y="53" width="34" height="22" fill="#70747a"/>
 <g fill="#3a3e44"><rect x="2" y="58" width="30" height="3"/><rect x="2" y="65" width="30" height="3"/><rect x="64" y="58" width="30" height="3"/><rect x="64" y="65" width="30" height="3"/></g>
 <rect x="-10" y="74" width="120" height="36" fill="#c0503e"/><rect x="-10" y="76" width="40" height="4" fill="#4a8a6a"/></g>
 <g fill="#d4508e"><circle cx="4" cy="36" r="5"/><circle cx="10" cy="28" r="4"/><circle cx="18" cy="24" r="5"/><circle cx="26" cy="20" r="4"/><circle cx="34" cy="14" r="5"/><circle cx="42" cy="10" r="4"/><circle cx="48" cy="4" r="4"/><circle cx="8" cy="12" r="5"/><circle cx="28" cy="6" r="4"/><circle cx="2" cy="6" r="4"/><circle cx="14" cy="96" r="5"/><circle cx="22" cy="90" r="5"/><circle cx="30" cy="84" r="4"/><circle cx="40" cy="80" r="5"/><circle cx="50" cy="76" r="4"/><circle cx="56" cy="72" r="4"/><circle cx="36" cy="94" r="5"/></g>
 <path d="M-2 42C10 30 30 18 50 2M10 100C25 90 40 80 58 70" stroke="#7a2a4a" stroke-width="1.5" fill="none"/></svg></div>
<div class="abs td" style="left:1418px;top:875px">否</div>
<div class="abs btn teal" style="left:1558px;top:868px;width:59px"><span class="pi"><svg width="13" height="13" viewBox="0 0 13 13"><path d="M6.5 0.5v12M0.5 6.5h12" stroke="#fff" stroke-width="3"/></svg></span><span class="bt" style="left:25px">查看</span></div>
<div class="abs btn teal" style="left:1622px;top:868px;width:89px"><span class="pi"><svg width="13" height="13" viewBox="0 0 13 13"><path d="M6.5 0.5v12M0.5 6.5h12" stroke="#fff" stroke-width="3"/></svg></span><span class="bt" style="left:25px">查看评论</span></div>
<div class="abs btn red" style="left:1716px;top:868px;width:60px"><span class="ti"><svg width="12" height="12" viewBox="0 0 12 12"><g fill="none" stroke="#fff" stroke-width="1.1"><path d="M0.5 2.8h11"/><path d="M4 2.8v-1.8h4v1.8"/><path d="M1.8 2.8l.7 8.7h7l.7-8.7"/><path d="M4.6 5v4.5M7.4 5v4.5"/></g></svg></span><span class="bt" style="left:24px">删除</span></div>
<div class="abs" style="left:880px;top:463px;font-family:'Liberation Mono',monospace;font-size:16.6px;color:#cc1d2c;line-height:22px;-webkit-text-stroke:0.25px #cc1d2c">www.bishebang.site</div>
<div class="abs" style="left:1903px;top:12px;width:17px;height:916px;background:#f1f1f1"></div>
<div class="abs" style="left:1905px;top:30px;width:13px;height:641px;background:#c1c1c1"></div>
<svg class="abs" style="left:1906px;top:17px" width="10" height="6" viewBox="0 0 10 6"><path d="M5 0.5L9.5 5.5H0.5z" fill="#a3a3a3"/></svg>
<svg class="abs" style="left:1906px;top:919px" width="10" height="6" viewBox="0 0 10 6"><path d="M5 5.5L9.5 0.5H0.5z" fill="#505050"/></svg>
</body></html>
